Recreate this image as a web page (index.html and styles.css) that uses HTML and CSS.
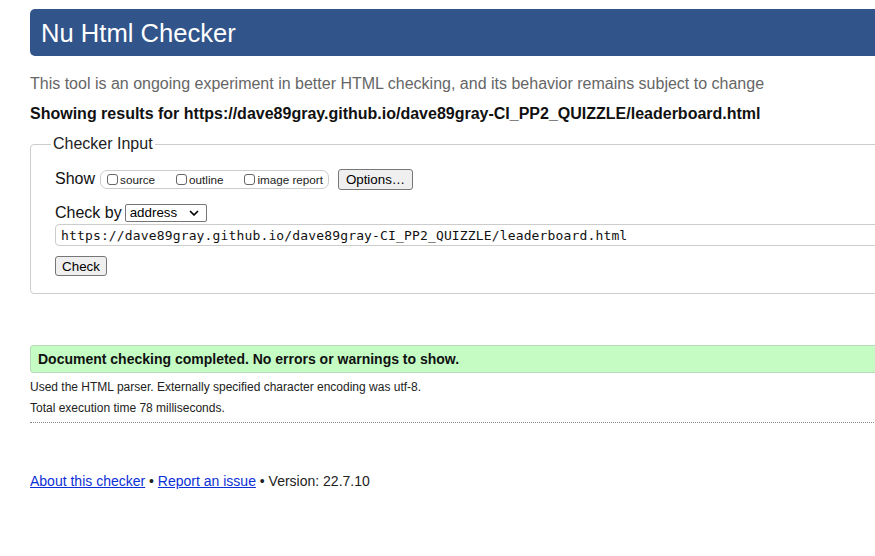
FILE: index.html
```html
<!DOCTYPE html>
<html lang="en">
<head>
<meta charset="utf-8">
<title>Nu Html Checker</title>
<link rel="stylesheet" href="styles.css">
</head>
<body>
<div class="page">
  <h1 class="header">Nu Html Checker</h1>
  <p class="intro">This tool is an ongoing experiment in better HTML checking, and its behavior remains subject to change</p>
  <p class="showing">Showing results for https://dave89gray.github.io/dave89gray-CI_PP2_QUIZZLE/leaderboard.html</p>
  <form class="checker">
    <fieldset class="input-set">
      <legend class="legend">Checker Input</legend>
      <div class="row show-row">
        <span class="label">Show</span>
        <fieldset class="opts">
          <label class="opt"><input type="checkbox" class="cb">source</label>
          <label class="opt"><input type="checkbox" class="cb">outline</label>
          <label class="opt"><input type="checkbox" class="cb">image report</label>
        </fieldset>
        <button type="button" class="btn btn-options">Options…</button>
      </div>
      <div class="row by-row">
        <span class="label">Check by</span>
        <span class="select-wrap">
          <select class="select"><option>address</option></select>
          <svg class="chev" width="10" height="7" viewBox="0 0 10 7"><path d="M1.5 1.5 L5 5 L8.5 1.5" fill="none" stroke="#000" stroke-width="1.7" stroke-linecap="round" stroke-linejoin="round"/></svg>
        </span>
      </div>
      <input class="url" type="text" value="https://dave89gray.github.io/dave89gray-CI_PP2_QUIZZLE/leaderboard.html">
      <div class="row check-row">
        <button type="button" class="btn btn-check">Check</button>
      </div>
    </fieldset>
  </form>
  <div class="success">Document checking completed. No errors or warnings to show.</div>
  <div class="details">
    <p class="detail">Used the HTML parser. Externally specified character encoding was utf-8.</p>
    <p class="detail">Total execution time 78 milliseconds.</p>
  </div>
  <p class="footer"><a href="#" class="link">About this checker</a> • <a href="#" class="link">Report an issue</a> • Version: 22.7.10</p>
</div>
</body>
</html>
```
FILE: styles.css
```css
html, body {
  margin: 0;
  padding: 0;
  overflow: hidden;
  background: #fff;
}
body {
  font-family: "Liberation Sans", Arial, Helvetica, sans-serif;
  color: #111;
}
.page {
  margin-left: 30px;
  width: 1000px;
  padding-top: 9px;
}
.header {
  margin: 0;
  height: 47px;
  background: #31548a;
  border-radius: 5px 0 0 5px;
  color: #fff;
  font-size: 25.6px;
  font-weight: normal;
  padding-left: 11px;
  padding-top: 1px;
  box-sizing: border-box;
  display: flex;
  align-items: center;
}
.intro {
  margin: 19px 0 0;
  font-size: 16px;
  line-height: 18px;
  color: #666;
}
.showing {
  margin: 12px 0 0;
  font-size: 16px;
  line-height: 18px;
  font-weight: bold;
  color: #111;
}
.checker {
  margin: 12px 0 0;
}
.input-set {
  margin: 0;
  border: 1px solid #ccc;
  border-radius: 4px;
  padding: 0 0 17px 20px;
  min-width: 0;
}
.legend {
  font-size: 16px;
  line-height: 18px;
  padding: 0 2px;
  color: #222;
}
.row {
  display: flex;
  align-items: center;
  height: 22px;
  margin-left: 4px;
}
.show-row {
  margin-top: 15px;
}
.label {
  font-size: 16px;
  color: #111;
}
.opts {
  margin: 0 0 0 5px;
  padding: 0 5px 0 6px;
  height: 17px;
  border: 1px solid #ccc;
  border-radius: 7px;
  display: flex;
  align-items: center;
  justify-content: space-between;
  width: 216px;
  box-sizing: content-box;
}
.opt {
  display: flex;
  align-items: center;
  font-size: 11.7px;
  color: #222;
}
.cb {
  appearance: none;
  -webkit-appearance: none;
  margin: 0 2px 0 0;
  width: 11px;
  height: 11px;
  border: 1px solid #666;
  border-radius: 3px;
  background: #fff;
  box-sizing: border-box;
}
.btn {
  font-family: "Liberation Sans", Arial, sans-serif;
  font-size: 13.33px;
  color: #000;
  background: #efefef;
  border: 1px solid #767676;
  border-radius: 3px;
  padding: 0 6px;
  box-sizing: border-box;
}
.btn-options {
  margin-left: 9px;
  width: 75px;
  height: 21px;
}
.by-row {
  margin-top: 12px;
}
.select-wrap {
  position: relative;
  margin-left: 3px;
  display: inline-flex;
}
.select {
  appearance: none;
  -webkit-appearance: none;
  width: 82px;
  height: 18px;
  font-family: "Liberation Sans", Arial, sans-serif;
  font-size: 13.33px;
  line-height: 16px;
  color: #000;
  background: #fff;
  border: 1px solid #767676;
  border-radius: 2px;
  padding: 0 0 0 4px;
}
.chev {
  position: absolute;
  right: 8px;
  top: 6px;
  pointer-events: none;
}
.url {
  display: block;
  margin: 0 0 0 4px;
  width: 960px;
  height: 22px;
  box-sizing: border-box;
  border: 1px solid #ccc;
  border-radius: 4px;
  padding: 0 0 0 5px;
  font-family: "DejaVu Sans Mono", "Liberation Mono", monospace;
  font-size: 13px;
  letter-spacing: 0.15px;
  color: #111;
  background: #fff;
}
.check-row {
  margin-top: 10px;
  height: 20px;
}
.btn-check {
  width: 52px;
  height: 20px;
}
.success {
  margin-top: 51px;
  height: 28px;
  box-sizing: border-box;
  border: 1px solid #b9d9b9;
  border-radius: 3px;
  background: #c4fcc4;
  padding-left: 7px;
  font-size: 14px;
  line-height: 26px;
  font-weight: bold;
  color: #111;
}
.details {
  padding-bottom: 7px;
  border-bottom: 1px dotted #888;
}
.detail {
  margin: 7px 0 0;
  font-size: 12px;
  line-height: 14px;
  color: #222;
}
.footer {
  margin: 50px 0 0;
  font-size: 14px;
  line-height: 16px;
  color: #222;
}
.link {
  color: #0b2fd6;
  text-decoration: underline;
}
```
